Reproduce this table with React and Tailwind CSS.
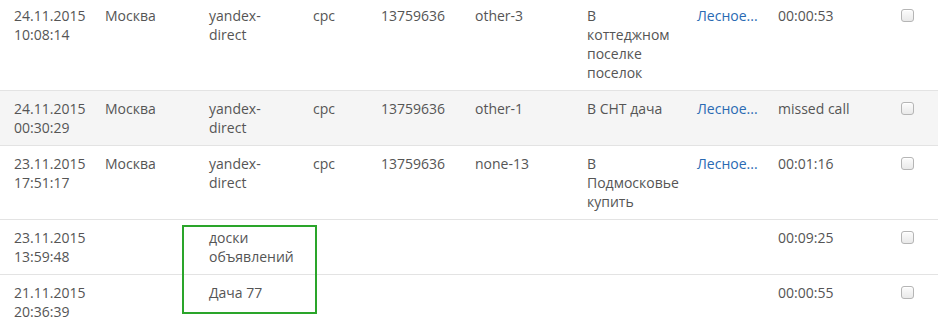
import React from "react";

const rows = [
  {
    date: ["24.11.2015", "10:08:14"],
    city: "Москва",
    source: ["yandex-", "direct"],
    medium: "cpc",
    campaign: "13759636",
    content: "other-3",
    term: ["В", "коттеджном", "поселке", "поселок"],
    site: "Лесное...",
    duration: "00:00:53",
  },
  {
    date: ["24.11.2015", "00:30:29"],
    city: "Москва",
    source: ["yandex-", "direct"],
    medium: "cpc",
    campaign: "13759636",
    content: "other-1",
    term: ["В СНТ дача"],
    site: "Лесное...",
    duration: "missed call",
    shaded: true,
  },
  {
    date: ["23.11.2015", "17:51:17"],
    city: "Москва",
    source: ["yandex-", "direct"],
    medium: "cpc",
    campaign: "13759636",
    content: "none-13",
    term: ["В", "Подмосковье", "купить"],
    site: "Лесное...",
    duration: "00:01:16",
  },
  {
    date: ["23.11.2015", "13:59:48"],
    source: ["доски", "объявлений"],
    duration: "00:09:25",
  },
  {
    date: ["21.11.2015", "20:36:39"],
    source: ["Дача 77"],
    duration: "00:00:55",
  },
];

function Lines({ items }) {
  if (!items) return null;
  return items.map((l, i) => (
    <span key={i} className="block whitespace-nowrap">
      {l}
    </span>
  ));
}

function Checkbox() {
  return (
    <span className="mt-[3px] block h-[13px] w-[13px] rounded-[3px] border border-[#b5b5b5] bg-gradient-to-b from-[#fcfcfc] to-[#e9e9e9] shadow-[inset_0_1px_0_#fff]" />
  );
}

export default function App() {
  const td = "align-top px-2 pt-2 pb-2 whitespace-nowrap";
  return (
    <div
      className="relative w-[938px] h-[327px] overflow-hidden bg-white text-[14px] leading-[19px] text-[#555]"
      style={{ fontFamily: '"Open Sans", "Liberation Sans", sans-serif' }}
    >
      <table className="-mt-[2px] w-[938px] table-fixed border-collapse">
        <colgroup>
          <col className="w-[97px]" />
          <col className="w-[104px]" />
          <col className="w-[104px]" />
          <col className="w-[68px]" />
          <col className="w-[94px]" />
          <col className="w-[112px]" />
          <col className="w-[110px]" />
          <col className="w-[81px]" />
          <col className="w-[123px]" />
          <col className="w-[45px]" />
        </colgroup>
        <tbody>
          {rows.map((r, i) => (
            <tr
              key={i}
              className={`${i > 0 ? "border-t border-[#e3e3e3]" : ""} ${
                r.shaded ? "bg-[#f5f5f5]" : "bg-white"
              }`}
            >
              <td className={`${td} pl-[14px]`}>
                <Lines items={r.date} />
              </td>
              <td className={td}>{r.city}</td>
              <td className={td}>
                <Lines items={r.source} />
              </td>
              <td className={td}>{r.medium}</td>
              <td className={td}>{r.campaign}</td>
              <td className={td}>{r.content}</td>
              <td className={td}>
                <Lines items={r.term} />
              </td>
              <td className={`${td} overflow-hidden text-[#2a6ab3]`}>{r.site}</td>
              <td className={td}>{r.duration}</td>
              <td className={`${td} pl-[8px]`}>
                <Checkbox />
              </td>
            </tr>
          ))}
        </tbody>
      </table>
      <div className="pointer-events-none absolute left-[182px] top-[225px] h-[89px] w-[135px] border-2 border-[#2aa52a]" />
    </div>
  );
}
